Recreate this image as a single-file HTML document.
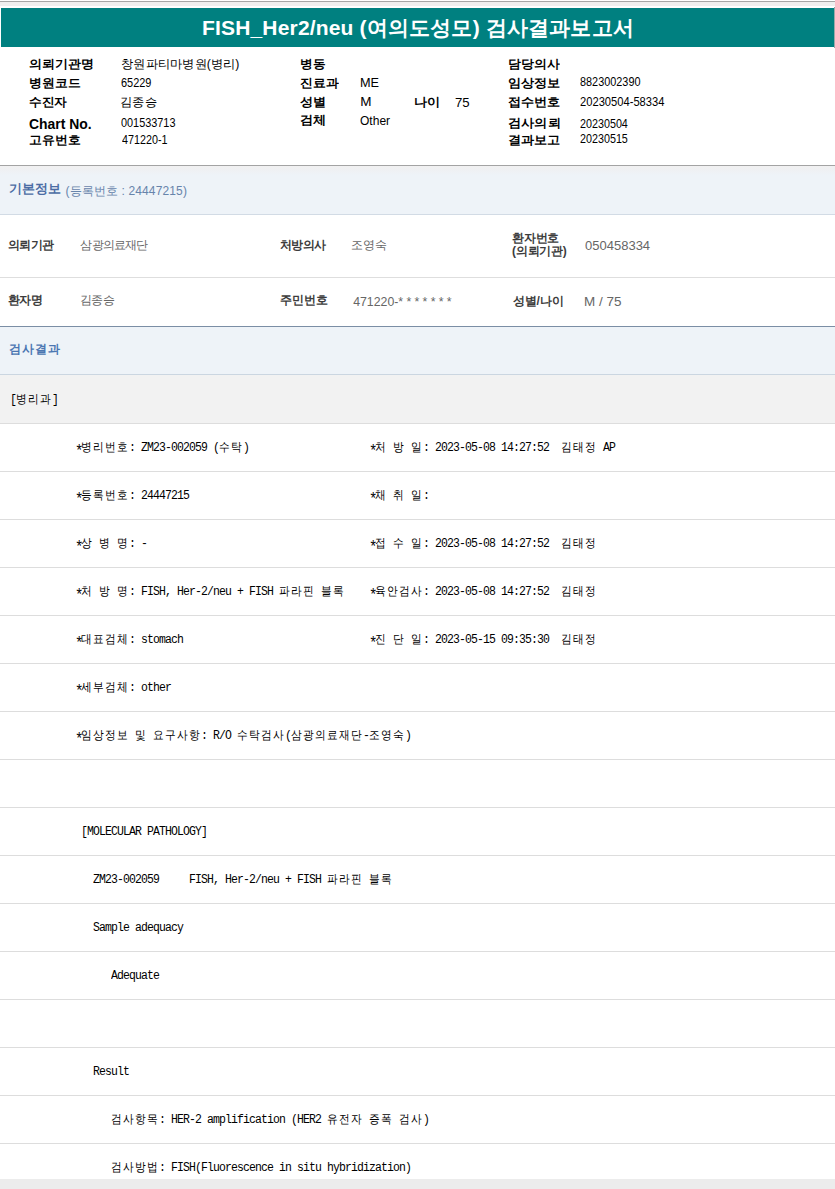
<!DOCTYPE html>
<html><head><meta charset="utf-8"><style>*{margin:0;padding:0}
html,body{width:835px;height:1189px;overflow:hidden;background:#fff}
body{position:relative;font-family:"Liberation Sans",sans-serif}
.r{position:absolute;left:0;width:835px}
.t{position:absolute;white-space:nowrap;line-height:1.3;transform-origin:0 0}
.title{color:#fff;font-weight:bold}
.hl{font-weight:bold;color:#000}
.hv,.hvn{color:#000}
.sec{font-weight:bold;color:#4b6ca4}
.sub{color:#6784ab}
.sec2{font-weight:bold;color:#4b76b2}
.bl{font-weight:600;color:#3c3c3c}
.bv,.bvn{color:#666}
.m{position:absolute;white-space:nowrap;font-family:"Liberation Mono",monospace;font-size:11.50px;letter-spacing:-0.900px;line-height:14px;color:#000;transform:scaleY(1.120);transform-origin:0 50%}
.m i{font-style:normal;position:relative;top:4px;left:0;font-size:14px;letter-spacing:-2.4px;line-height:0}
.m b{display:inline-block;width:12px;font-weight:normal;font-size:11.00px;letter-spacing:0;text-indent:0.00px}
</style></head><body>
<div class="r" style="top:1px;height:1px;background:#a6a6a6"></div>
<div class="r" style="top:2px;height:4px;background:#efefef"></div>
<div style="position:absolute;left:1px;top:8px;width:833px;height:39px;background:#008080"></div>
<div style="position:absolute;left:834px;top:7px;width:1px;height:41px;background:#9aa9a9"></div>
<div class="r" style="top:165px;height:1px;background:#a3a3a3"></div>
<div class="r" style="top:166px;height:48px;background:linear-gradient(#f1f1f1 0px,#eff0f2 3px,#eef3f8 9px)"></div>
<div class="r" style="top:214px;height:1px;background:#d2dbe5"></div>
<div class="r" style="top:277px;height:1px;background:#dedede"></div>
<div class="r" style="top:326px;height:1px;background:#7b8ea5"></div>
<div class="r" style="top:327px;height:47px;background:#eef3f8"></div>
<div class="r" style="top:374px;height:1px;background:#cbd6e1"></div>
<div class="r" style="top:375px;height:48px;background:#f2f2f2"></div>
<div class="r" style="top:423px;height:1px;background:#dddddd"></div>
<div class="r" style="top:471px;height:1px;background:#dddddd"></div>
<div class="r" style="top:519px;height:1px;background:#dddddd"></div>
<div class="r" style="top:567px;height:1px;background:#dddddd"></div>
<div class="r" style="top:615px;height:1px;background:#dddddd"></div>
<div class="r" style="top:663px;height:1px;background:#dddddd"></div>
<div class="r" style="top:711px;height:1px;background:#dddddd"></div>
<div class="r" style="top:759px;height:1px;background:#dddddd"></div>
<div class="r" style="top:807px;height:1px;background:#dddddd"></div>
<div class="r" style="top:855px;height:1px;background:#dddddd"></div>
<div class="r" style="top:903px;height:1px;background:#dddddd"></div>
<div class="r" style="top:951px;height:1px;background:#dddddd"></div>
<div class="r" style="top:999px;height:1px;background:#dddddd"></div>
<div class="r" style="top:1047px;height:1px;background:#dddddd"></div>
<div class="r" style="top:1095px;height:1px;background:#dddddd"></div>
<div class="r" style="top:1143px;height:1px;background:#dddddd"></div>
<div class="r" style="top:1179px;height:10px;background:#ececec"></div>
<div id="title" class="t title" style="left:202.00px;top:14.00px;font-size:21.00px;letter-spacing:0.171px">FISH_Her2/neu (여의도성모) 검사결과보고서</div>
<div id="h1" class="t hl" style="left:29.00px;top:57.20px;font-size:11.50px;letter-spacing:0.000px;transform:scaleX(1.0842)">의뢰기관명</div>
<div id="h2" class="t hl" style="left:29.00px;top:76.00px;font-size:11.50px;letter-spacing:0.000px;transform:scaleX(1.0696)">병원코드</div>
<div id="h3" class="t hl" style="left:29.00px;top:94.80px;font-size:11.50px;letter-spacing:0.000px;transform:scaleX(1.0582)">수진자</div>
<div id="h4" class="t hl" style="left:29.00px;top:115.20px;font-size:14.00px;letter-spacing:0.000px;transform:scaleX(0.9939)">Chart No.</div>
<div id="h5" class="t hl" style="left:29.00px;top:133.00px;font-size:11.50px;letter-spacing:0.000px;transform:scaleX(1.0696)">고유번호</div>
<div id="v1" class="t hv" style="left:121.00px;top:57.00px;font-size:12.00px;letter-spacing:0.000px;transform:scaleX(1.0210)">창원파티마병원(병리)</div>
<div id="v2" class="t hvn" style="left:121.00px;top:74.00px;font-size:13.50px;letter-spacing:0.000px;transform:scaleX(0.8114)">65229</div>
<div id="v3" class="t hv" style="left:119.60px;top:94.60px;font-size:12.00px;letter-spacing:0.000px;transform:scaleX(1.0242)">김종승</div>
<div id="v4" class="t hvn" style="left:120.60px;top:114.00px;font-size:13.50px;letter-spacing:0.000px;transform:scaleX(0.8062)">001533713</div>
<div id="v5" class="t hvn" style="left:121.60px;top:130.80px;font-size:13.50px;letter-spacing:0.000px;transform:scaleX(0.7968)">471220-1</div>
<div id="m1" class="t hl" style="left:299.60px;top:57.00px;font-size:11.50px;letter-spacing:0.000px;transform:scaleX(1.0573)">병동</div>
<div id="m2" class="t hl" style="left:299.60px;top:76.00px;font-size:11.50px;letter-spacing:0.000px;transform:scaleX(1.0698)">진료과</div>
<div id="m3" class="t hl" style="left:300.00px;top:95.00px;font-size:11.50px;letter-spacing:0.000px;transform:scaleX(1.0945)">성별</div>
<div id="m4" class="t hl" style="left:300.00px;top:112.80px;font-size:11.50px;letter-spacing:0.000px;transform:scaleX(1.0945)">검체</div>
<div id="mv2" class="t hvn" style="left:360.20px;top:73.60px;font-size:13.50px;letter-spacing:0.000px;transform:scaleX(0.9413)">ME</div>
<div id="mv3" class="t hvn" style="left:360.20px;top:93.20px;font-size:13.50px;letter-spacing:0.000px">M</div>
<div id="mv4" class="t hvn" style="left:360.20px;top:111.80px;font-size:13.50px;letter-spacing:0.000px;transform:scaleX(0.8912)">Other</div>
<div id="age" class="t hl" style="left:413.60px;top:95.00px;font-size:11.50px;letter-spacing:0.000px;transform:scaleX(1.0960)">나이</div>
<div id="agev" class="t hvn" style="left:454.60px;top:94.00px;font-size:13.50px;letter-spacing:0.000px;transform:scaleX(0.9776)">75</div>
<div id="r1" class="t hl" style="left:508.40px;top:57.00px;font-size:11.50px;letter-spacing:0.000px;transform:scaleX(1.0770)">담당의사</div>
<div id="r2" class="t hl" style="left:508.40px;top:76.20px;font-size:11.50px;letter-spacing:0.000px;transform:scaleX(1.0961)">임상정보</div>
<div id="r3" class="t hl" style="left:508.40px;top:94.80px;font-size:11.50px;letter-spacing:0.000px;transform:scaleX(1.0961)">접수번호</div>
<div id="r4" class="t hl" style="left:508.40px;top:115.60px;font-size:11.50px;letter-spacing:0.000px;transform:scaleX(1.0985)">검사의뢰</div>
<div id="r5" class="t hl" style="left:508.40px;top:132.80px;font-size:11.50px;letter-spacing:0.000px;transform:scaleX(1.0961)">결과보고</div>
<div id="rv2" class="t hvn" style="left:579.80px;top:73.40px;font-size:13.50px;letter-spacing:0.000px;transform:scaleX(0.8056)">8823002390</div>
<div id="rv3" class="t hvn" style="left:579.80px;top:93.00px;font-size:13.50px;letter-spacing:0.000px;transform:scaleX(0.8273)">20230504-58334</div>
<div id="rv4" class="t hvn" style="left:579.80px;top:114.60px;font-size:13.50px;letter-spacing:0.000px;transform:scaleX(0.7967)">20230504</div>
<div id="rv5" class="t hvn" style="left:579.80px;top:130.20px;font-size:13.50px;letter-spacing:0.000px;transform:scaleX(0.7967)">20230515</div>
<div id="sec" class="t sec" style="left:8.60px;top:181.40px;font-size:12.50px;letter-spacing:0.050px">기본정보</div>
<div id="secsub" class="t sub" style="left:65.40px;top:184.00px;font-size:12.00px;letter-spacing:0.133px">(등록번호 : 24447215)</div>
<div id="b1" class="t bl" style="left:8.20px;top:237.60px;font-size:12.00px;letter-spacing:-0.800px">의뢰기관</div>
<div id="b1v" class="t bv" style="left:80.40px;top:237.60px;font-size:12.20px;letter-spacing:-0.780px">삼광의료재단</div>
<div id="b2" class="t bl" style="left:280.00px;top:237.80px;font-size:12.00px;letter-spacing:-0.700px">처방의사</div>
<div id="b2v" class="t bv" style="left:350.80px;top:237.80px;font-size:12.20px;letter-spacing:0.150px">조영숙</div>
<div id="b3a" class="t bl" style="left:512.00px;top:231.40px;font-size:12.00px;letter-spacing:-0.200px">환자번호</div>
<div id="b3b" class="t bl" style="left:512.00px;top:244.00px;font-size:12.00px;letter-spacing:-0.240px">(의뢰기관)</div>
<div id="b3v" class="t bvn" style="left:584.80px;top:238.00px;font-size:13.00px;letter-spacing:0.000px;transform:scaleX(1.0005)">050458334</div>
<div id="c1" class="t bl" style="left:8.00px;top:293.00px;font-size:12.00px;letter-spacing:-0.750px">환자명</div>
<div id="c1v" class="t bv" style="left:80.20px;top:293.00px;font-size:12.20px;letter-spacing:-0.750px">김종승</div>
<div id="c2" class="t bl" style="left:280.00px;top:293.00px;font-size:12.00px;letter-spacing:-0.100px">주민번호</div>
<div id="c2v" class="t bvn" style="left:353.20px;top:295.20px;font-size:12.30px;letter-spacing:0.000px">471220-<span style="letter-spacing:3.3px">*******</span></div>
<div id="c3" class="t bl" style="left:512.60px;top:293.80px;font-size:12.00px;letter-spacing:-0.075px">성별/나이</div>
<div id="c3v" class="t bvn" style="left:584.20px;top:293.80px;font-size:13.00px;letter-spacing:0.000px;transform:scaleX(1.0360)">M / 75</div>
<div id="sec2" class="t sec2" style="left:9.20px;top:342.00px;font-size:12.00px;letter-spacing:1.100px">검사결과</div>
<div class="m" style="left:10.00px;top:393.00px">[<b>병</b><b>리</b><b>과</b>]</div>
<div class="m" style="left:75.00px;top:441.00px"><i>*</i><b>병</b><b>리</b><b>번</b><b>호</b>:&#160;ZM23-002059&#160;(<b>수</b><b>탁</b>)</div>
<div class="m" style="left:369.00px;top:441.00px"><i>*</i><b>처</b>&#160;<b>방</b>&#160;<b>일</b>:&#160;2023-05-08&#160;14:27:52&#160;&#160;<b>김</b><b>태</b><b>정</b>&#160;AP</div>
<div class="m" style="left:75.00px;top:489.00px"><i>*</i><b>등</b><b>록</b><b>번</b><b>호</b>:&#160;24447215</div>
<div class="m" style="left:369.00px;top:489.00px"><i>*</i><b>채</b>&#160;<b>취</b>&#160;<b>일</b>:</div>
<div class="m" style="left:75.00px;top:537.00px"><i>*</i><b>상</b>&#160;<b>병</b>&#160;<b>명</b>:&#160;-</div>
<div class="m" style="left:369.00px;top:537.00px"><i>*</i><b>접</b>&#160;<b>수</b>&#160;<b>일</b>:&#160;2023-05-08&#160;14:27:52&#160;&#160;<b>김</b><b>태</b><b>정</b></div>
<div class="m" style="left:75.00px;top:585.00px"><i>*</i><b>처</b>&#160;<b>방</b>&#160;<b>명</b>:&#160;FISH,&#160;Her-2/neu&#160;+&#160;FISH&#160;<b>파</b><b>라</b><b>핀</b>&#160;<b>블</b><b>록</b></div>
<div class="m" style="left:369.00px;top:585.00px"><i>*</i><b>육</b><b>안</b><b>검</b><b>사</b>:&#160;2023-05-08&#160;14:27:52&#160;&#160;<b>김</b><b>태</b><b>정</b></div>
<div class="m" style="left:75.00px;top:633.00px"><i>*</i><b>대</b><b>표</b><b>검</b><b>체</b>:&#160;stomach</div>
<div class="m" style="left:369.00px;top:633.00px"><i>*</i><b>진</b>&#160;<b>단</b>&#160;<b>일</b>:&#160;2023-05-15&#160;09:35:30&#160;&#160;<b>김</b><b>태</b><b>정</b></div>
<div class="m" style="left:75.00px;top:681.00px"><i>*</i><b>세</b><b>부</b><b>검</b><b>체</b>:&#160;other</div>
<div class="m" style="left:75.00px;top:729.00px"><i>*</i><b>임</b><b>상</b><b>정</b><b>보</b>&#160;<b>및</b>&#160;<b>요</b><b>구</b><b>사</b><b>항</b>:&#160;R/O&#160;<b>수</b><b>탁</b><b>검</b><b>사</b>(<b>삼</b><b>광</b><b>의</b><b>료</b><b>재</b><b>단</b>-<b>조</b><b>영</b><b>숙</b>)</div>
<div class="m" style="left:81.00px;top:825.00px">[MOLECULAR&#160;PATHOLOGY]</div>
<div class="m" style="left:93.00px;top:873.00px">ZM23-002059&#160;&#160;&#160;&#160;&#160;FISH,&#160;Her-2/neu&#160;+&#160;FISH&#160;<b>파</b><b>라</b><b>핀</b>&#160;<b>블</b><b>록</b></div>
<div class="m" style="left:93.00px;top:921.00px">Sample&#160;adequacy</div>
<div class="m" style="left:111.00px;top:969.00px">Adequate</div>
<div class="m" style="left:93.00px;top:1065.00px">Result</div>
<div class="m" style="left:111.00px;top:1113.00px"><b>검</b><b>사</b><b>항</b><b>목</b>:&#160;HER-2&#160;amplification&#160;(HER2&#160;<b>유</b><b>전</b><b>자</b>&#160;<b>증</b><b>폭</b>&#160;<b>검</b><b>사</b>)</div>
<div class="m" style="left:111.00px;top:1161.00px"><b>검</b><b>사</b><b>방</b><b>법</b>:&#160;FISH(Fluorescence&#160;in&#160;situ&#160;hybridization)</div>
</body></html>
